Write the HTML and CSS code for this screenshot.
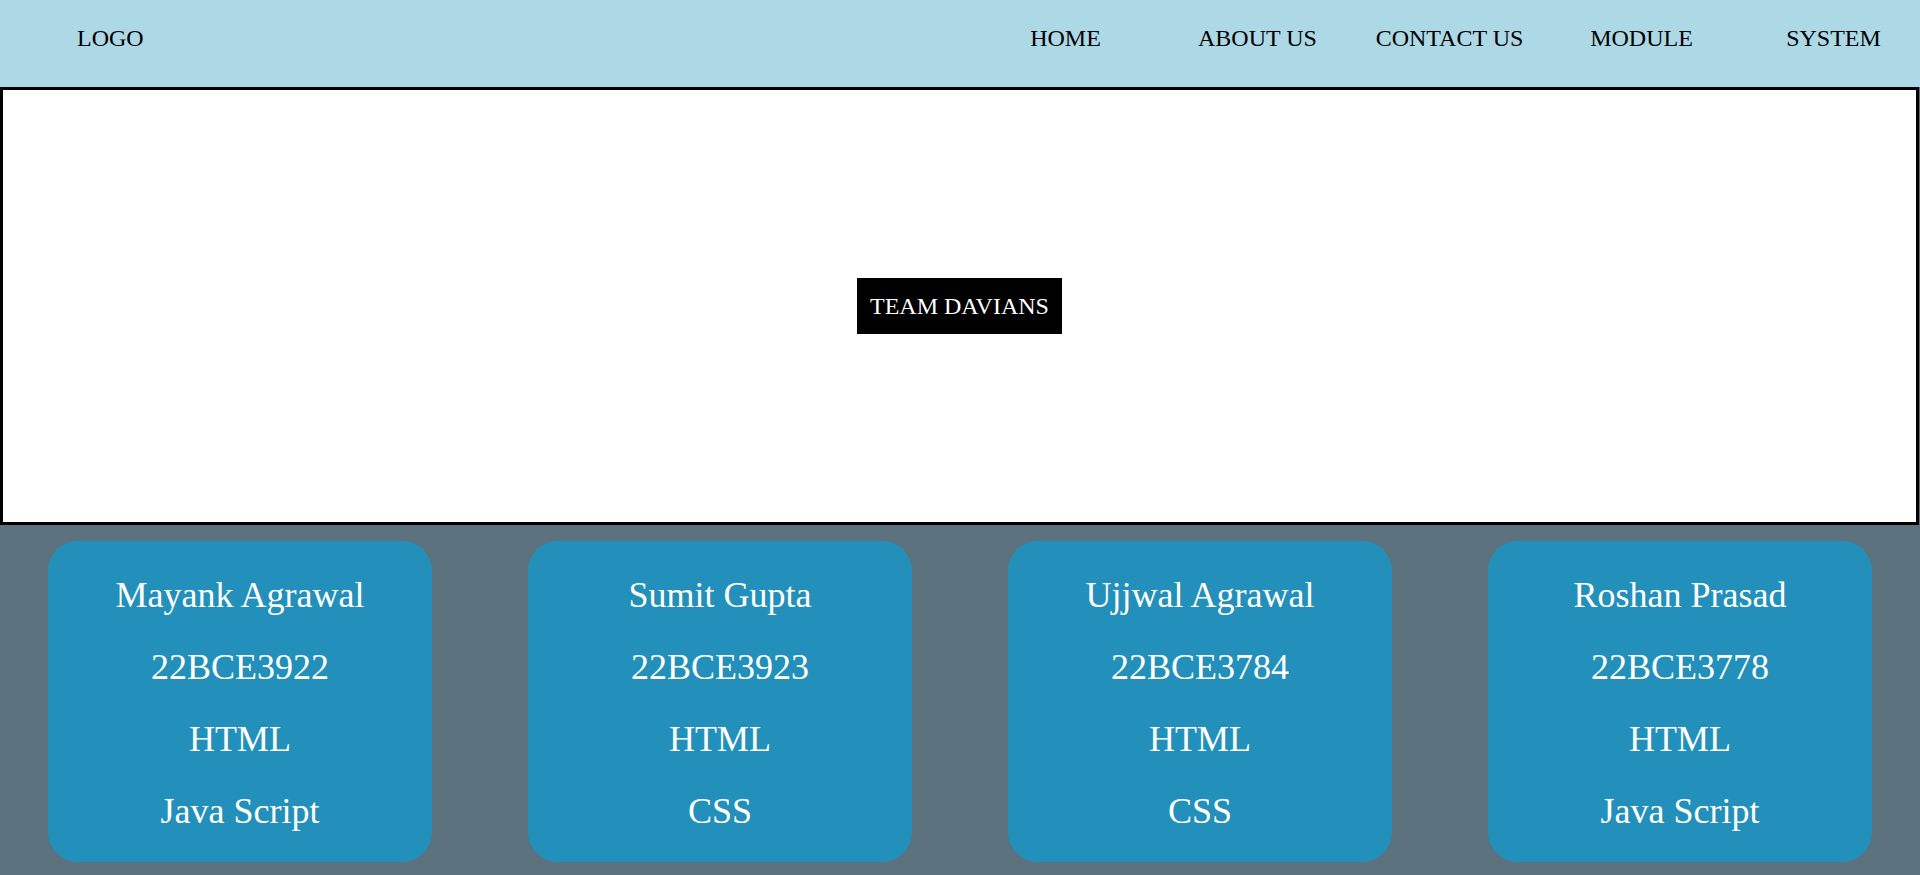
FILE: index.html
```html
<!DOCTYPE html>
<html lang="en">
<head>
<meta charset="utf-8">
<title>Team Davians</title>
<link rel="stylesheet" href="styles.css">
</head>
<body>
<header class="navbar">
  <div class="logo">LOGO</div>
  <ul class="menu">
    <li class="menu-item">HOME</li>
    <li class="menu-item">ABOUT US</li>
    <li class="menu-item">CONTACT US</li>
    <li class="menu-item">MODULE</li>
    <li class="menu-item">SYSTEM</li>
  </ul>
</header>
<section class="hero">
  <div class="badge">TEAM DAVIANS</div>
</section>
<section class="team">
  <div class="card">
    <div class="line">Mayank Agrawal</div>
    <div class="line">22BCE3922</div>
    <div class="line">HTML</div>
    <div class="line">Java Script</div>
  </div>
  <div class="card">
    <div class="line">Sumit Gupta</div>
    <div class="line">22BCE3923</div>
    <div class="line">HTML</div>
    <div class="line">CSS</div>
  </div>
  <div class="card">
    <div class="line">Ujjwal Agrawal</div>
    <div class="line">22BCE3784</div>
    <div class="line">HTML</div>
    <div class="line">CSS</div>
  </div>
  <div class="card">
    <div class="line">Roshan Prasad</div>
    <div class="line">22BCE3778</div>
    <div class="line">HTML</div>
    <div class="line">Java Script</div>
  </div>
</section>
</body>
</html>
```
FILE: styles.css
```css
html, body {
  margin: 0;
  padding: 0;
}
body {
  background: #5b717d;
  font-family: "Liberation Serif", "Times New Roman", serif;
  min-height: 875px;
}
.navbar {
  height: 87px;
  background: #add8e6;
  display: flex;
  justify-content: space-between;
  align-items: flex-start;
  box-sizing: border-box;
  padding-top: 25px;
  font-size: 24px;
  color: #000;
}
.logo {
  padding-left: 77px;
}
.menu {
  display: flex;
  list-style: none;
  margin: 0;
  padding: 0;
}
.menu-item {
  width: 192px;
  box-sizing: border-box;
  padding-left: 19px;
  text-align: center;
}
.hero {
  height: 432px;
  border: 3px solid #000;
  margin-right: 1px;
  background: #fff;
  display: flex;
  align-items: center;
  justify-content: center;
}
.badge {
  background: #000;
  color: #fff;
  font-size: 24px;
  padding: 15px 13.5px 14.5px;
}
.team {
  display: flex;
  justify-content: space-around;
  padding-top: 16px;
}
.card {
  width: 384px;
  box-sizing: border-box;
  padding: 18px 0 15px;
  border-radius: 30px;
  background: #2290ba;
  color: #fff;
  text-align: center;
  font-size: 36px;
}
.line {
  line-height: 72px;
}
```
